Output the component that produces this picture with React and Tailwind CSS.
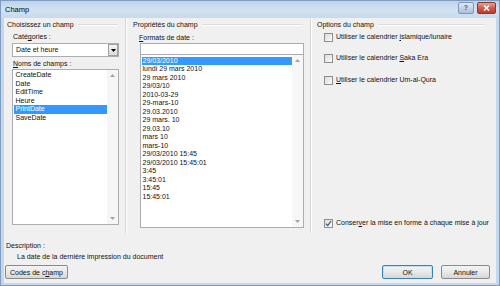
import React from "react";

const fieldNames = ["CreateDate", "Date", "EditTime", "Heure", "PrintDate", "SaveDate"];

const dateFormats = [
  "29/03/2010",
  "lundi 29 mars 2010",
  "29 mars 2010",
  "29/03/10",
  "2010-03-29",
  "29-mars-10",
  "29.03.2010",
  "29 mars. 10",
  "29.03.10",
  "mars 10",
  "mars-10",
  "29/03/2010 15:45",
  "29/03/2010 15:45:01",
  "3:45",
  "3:45:01",
  "15:45",
  "15:45:01",
];

function ScrollBar() {
  return (
    <div className="w-[11px] shrink-0 flex flex-col justify-between items-center bg-[#f6f6f6] py-[4px]">
      <svg width="5" height="3" viewBox="0 0 5 3">
        <path d="M0 3 L2.5 0 L5 3 Z" fill="#a3a3a3" />
      </svg>
      <svg width="5" height="3" viewBox="0 0 5 3">
        <path d="M0 0 L5 0 L2.5 3 Z" fill="#a3a3a3" />
      </svg>
    </div>
  );
}

function GroupHeader({ title, pl, mr }) {
  return (
    <div className={`flex items-center h-[9px] leading-[9px] ${pl}`}>
      <span className="whitespace-nowrap">{title}</span>
      <div className={`flex-1 ml-[4px] border-t border-[#dcdcdc] border-b-white border-b h-0 ${mr}`} />
    </div>
  );
}

function CheckBox({ checked }) {
  return (
    <div className="w-[9px] h-[9px] shrink-0 border border-[#8e8f8f] bg-gradient-to-br from-[#dcdcdc] to-[#fbfbfb] flex items-center justify-center">
      {checked && (
        <svg width="7" height="7" viewBox="0 0 7 7">
          <path d="M1 3.8 L2.8 5.6 L6 1" stroke="#3c5a8a" strokeWidth="1.3" fill="none" />
        </svg>
      )}
    </div>
  );
}

function Button({ children, primary, w }) {
  return (
    <div
      className={`${w} h-[14px] rounded-[2px] border flex items-center justify-center leading-none bg-gradient-to-b from-[#f3f3f3] via-[#e9e9e9] to-[#d6d6d6] ${
        primary ? "border-[#3c7fb1] shadow-[inset_0_0_0_1px_#bfe2f6]" : "border-[#8a8a8a]"
      }`}
    >
      {children}
    </div>
  );
}

export default function App() {
  return (
    <div className="w-[500px] h-[286px] flex flex-col bg-[#c4d7ec] border border-[#7f9dc0] text-[#111] text-[7px] font-['Liberation_Sans',Arial,sans-serif] overflow-hidden">
      {/* title bar */}
      <div className="h-[17px] shrink-0 flex items-center justify-between pl-[4px] pr-[3px] bg-gradient-to-b from-[#bdd2ea] via-[#d3e2f2] to-[#c7daee]">
        <span className="text-[7.5px] text-black">Champ</span>
        <div className="flex items-start gap-[3px] self-start pt-[1px]">
          <div className="w-[16px] h-[12px] rounded-[2px] border border-[#7f97b5] bg-gradient-to-b from-[#dfe9f5] to-[#a9c0dc] flex items-center justify-center text-[7px] text-[#4c5f78] font-bold">
            ?
          </div>
          <div className="w-[19px] h-[12px] rounded-[2px] border border-[#7c3a31] bg-gradient-to-b from-[#e6a195] via-[#cf5a48] to-[#c33a25] flex items-center justify-center">
            <svg width="7" height="6" viewBox="0 0 7 6">
              <path d="M1 0.5 L6 5.5 M6 0.5 L1 5.5" stroke="white" strokeWidth="1.6" />
            </svg>
          </div>
        </div>
      </div>

      {/* client area */}
      <div className="flex-1 mx-[3px] mb-[2px] bg-[#f0f0f0] flex flex-col">
        <div className="h-[215px] flex">
          {/* column 1 */}
          <div className="w-[121px] shrink-0 pt-[2px] flex flex-col">
            <GroupHeader title="Choisissez un champ" pl="pl-[3px]" mr="mr-[7px]" />
            <div className="mt-[3px] pl-[9px] leading-[9px]">
              Caté<u>g</u>ories :
            </div>
            <div className="mt-[2px] ml-[8px] w-[107px] h-[14px] bg-white border border-[#abadb3] flex items-center">
              <span className="flex-1 pl-[3px]">Date et heure</span>
              <div className="w-[10px] h-[12px] border border-[#a0a0a0] bg-gradient-to-b from-[#f5f5f5] to-[#dcdcdc] flex items-center justify-center">
                <svg width="5" height="3" viewBox="0 0 5 3">
                  <path d="M0 0 L5 0 L2.5 3 Z" fill="#000" />
                </svg>
              </div>
            </div>
            <div className="mt-[2px] pl-[9px] leading-[9px]">
              <u>N</u>oms de champs :
            </div>
            <div className="mt-[1px] ml-[8px] w-[107px] h-[156px] bg-white border border-[#abadb3] flex">
              <div className="flex-1 pt-[1px] pl-[0.5px] leading-[8.6px]">
                {fieldNames.map((n) => (
                  <div key={n} className={n === "PrintDate" ? "bg-[#3399ff] text-white pl-[2px]" : "pl-[2px]"}>
                    {n}
                  </div>
                ))}
              </div>
              <ScrollBar />
            </div>
          </div>

          <div className="w-[2px] shrink-0 border-l border-[#d5d5d5] border-r border-r-white" />

          {/* column 2 */}
          <div className="w-[183px] shrink-0 pt-[2px] flex flex-col">
            <GroupHeader title="Propriétés du champ" pl="pl-[6px]" mr="mr-[7px]" />
            <div className="mt-[3.5px] pl-[12px] leading-[9px]">
              <u>F</u>ormats de date :
            </div>
            <div className="mt-[1.5px] ml-[13px] w-[164px] h-[12px] bg-white border border-[#abadb3]" />
            <div className="ml-[13px] w-[164px] h-[173px] bg-white border border-t-0 border-[#abadb3] flex">
              <div className="flex-1 pt-[1.5px] pl-[0.5px] leading-[8.5px]">
                {dateFormats.map((f, i) => (
                  <div key={f} className={i === 0 ? "bg-[#3399ff] text-white pl-[1px]" : "pl-[1px]"}>
                    {f}
                  </div>
                ))}
              </div>
              <ScrollBar />
            </div>
          </div>

          <div className="w-[2px] shrink-0 border-l border-[#d5d5d5] border-r border-r-white" />

          {/* column 3 */}
          <div className="flex-1 pt-[2px] pb-[5.5px] flex flex-col">
            <GroupHeader title="Options du champ" pl="pl-[5px]" mr="mr-[11px]" />
            <div className="mt-[3.5px] pl-[12px] flex flex-col gap-[12.5px]">
              <div className="flex items-center gap-[3px] h-[9px]">
                <CheckBox />
                <span>Utiliser le calendrier <u>i</u>slamique/lunaire</span>
              </div>
              <div className="flex items-center gap-[3px] h-[9px]">
                <CheckBox />
                <span>Utiliser le calendrier <u>S</u>aka Era</span>
              </div>
              <div className="flex items-center gap-[3px] h-[9px]">
                <CheckBox />
                <span><u>U</u>tiliser le calendrier Um-al-Qura</span>
              </div>
            </div>
            <div className="mt-auto pl-[12px] flex items-center gap-[3px] h-[9px]">
              <CheckBox checked />
              <span>Conser<u>v</u>er la mise en forme à chaque mise à jour</span>
            </div>
          </div>
        </div>

        {/* description */}
        <div className="mt-[7.5px] pl-[2px] leading-[9px]">Description :</div>
        <div className="mt-[2px] pl-[13px] leading-[9px]">La date de la dernière impression du document</div>

        {/* buttons */}
        <div className="mt-auto mb-[4px] pl-[1px] pr-[6px] flex items-center">
          <Button w="w-[63px]">
            Codes de c<u>h</u>amp
          </Button>
          <div className="flex-1" />
          <Button w="w-[51px]" primary>
            OK
          </Button>
          <div className="w-[8px]" />
          <Button w="w-[49px]">Annuler</Button>
        </div>
      </div>
    </div>
  );
}
